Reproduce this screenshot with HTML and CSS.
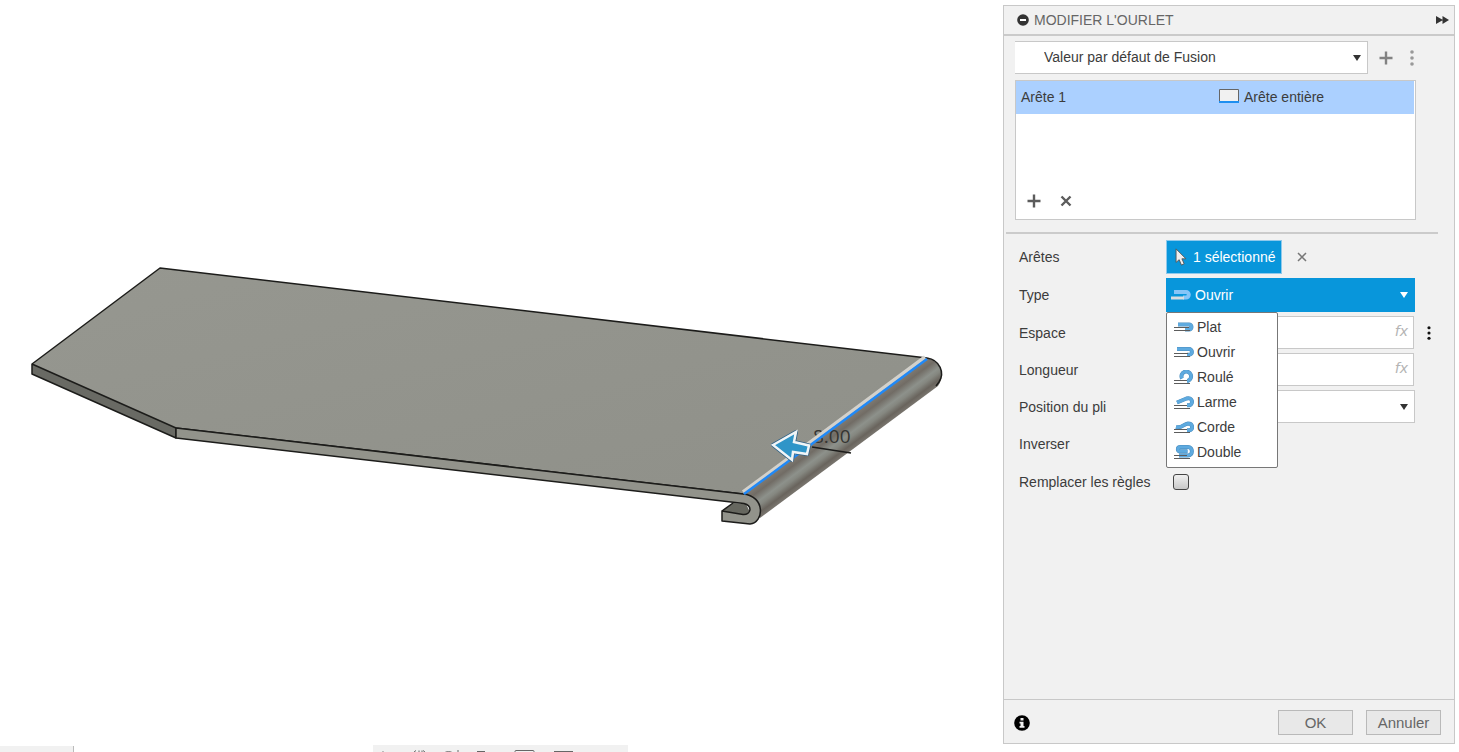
FILE: index.html
```html
<!DOCTYPE html>
<html lang="fr">
<head>
<meta charset="utf-8">
<title>Modifier l'ourlet</title>
<link rel="stylesheet" href="styles.css">
</head>
<body>
<svg class="sprites" aria-hidden="true">
  <symbol id="hem-flat" viewBox="0 0 20 14">
    <path class="hem-edge" d="M4 4.500H15a2.500 2.500 0 0 1 0 5H11"/>
    <path class="hem-fill" d="M4 4.500H15a2.500 2.500 0 0 1 0 5H11"/>
    <path class="hem-line" d="M0 7.500H15M0 10.500H16"/>
  </symbol>
  <symbol id="hem-open" viewBox="0 0 20 14">
    <path class="hem-edge" d="M3 4H15a2.900 2.900 0 0 1 0 5.800H13"/>
    <path class="hem-fill" d="M3 4H15a2.900 2.900 0 0 1 0 5.800H13"/>
    <path class="hem-line" d="M0 8.500H14M0 11.500H16"/>
  </symbol>
  <symbol id="hem-rolled" viewBox="0 0 20 14">
    <path class="hem-edge" d="M8 8.500A4.800 4.800 0 1 1 14 10.800H13"/>
    <path class="hem-fill" d="M8 8.500A4.800 4.800 0 1 1 14 10.800H13"/>
    <path class="hem-line" d="M0 10.500H13M0 13.500H16"/>
  </symbol>
  <symbol id="hem-tear" viewBox="0 0 20 14">
    <path class="hem-edge" d="M3 7.500L12.500 3.500C18 1.500 20 8.500 15.500 10.300H13"/>
    <path class="hem-fill" d="M3 7.500L12.500 3.500C18 1.500 20 8.500 15.500 10.300H13"/>
    <path class="hem-line" d="M0 10.500H13M0 13.500H16"/>
  </symbol>
  <symbol id="hem-rope" viewBox="0 0 20 14">
    <path class="hem-edge" d="M2 7C8 8.500 9.500 4 14 3.500C19 3.500 19.500 9.500 15.500 10.300H13"/>
    <path class="hem-fill" d="M2 7C8 8.500 9.500 4 14 3.500C19 3.500 19.500 9.500 15.500 10.300H13"/>
    <path class="hem-line" d="M0 9.500H13M0 12.500H16"/>
  </symbol>
  <symbol id="hem-double" viewBox="0 0 20 14">
    <path class="hem-edge" d="M13.500 6.300H6.500C3 6.300 3 2 6.500 2H14C19.200 2 19.200 10.500 14 10.500H5"/>
    <path class="hem-fill" d="M13.500 6.300H6.500C3 6.300 3 2 6.500 2H14C19.200 2 19.200 10.500 14 10.500H5"/>
    <path class="hem-line" d="M0 10.500H13M0 13.500H16"/>
  </symbol>
  <symbol id="plus" viewBox="0 0 14 14"><path d="M7 .5V13.500M.5 7H13.500" fill="none" stroke="currentColor" stroke-width="2.400"/></symbol>
  <symbol id="cross" viewBox="0 0 12 12"><path d="M2 2L10 10M10 2L2 10" fill="none" stroke="currentColor"/></symbol>
  <symbol id="dots" viewBox="0 0 4 16"><g fill="currentColor"><circle cx="2" cy="2" r="1.800"/><circle cx="2" cy="8" r="1.800"/><circle cx="2" cy="14" r="1.800"/></g></symbol>
</svg>

<div class="app">
  <main class="canvas">
    <svg class="model" viewBox="0 0 1003 752" preserveAspectRatio="xMinYMid meet" role="img" aria-label="Tôle avec ourlet ouvert">
      <defs>
        <linearGradient id="roll" gradientUnits="userSpaceOnUse" x1="835" y1="426" x2="852" y2="449">
          <stop offset="0" stop-color="#827d75"/>
          <stop offset=".25" stop-color="#716c65"/>
          <stop offset=".52" stop-color="#8d918b"/>
          <stop offset=".65" stop-color="#858780"/>
          <stop offset=".86" stop-color="#69645d"/>
          <stop offset="1" stop-color="#77736c"/>
        </linearGradient>
        <linearGradient id="face" x1="0" y1="0" x2="1" y2="1">
          <stop offset="0" stop-color="#969790"/>
          <stop offset="1" stop-color="#8f9089"/>
        </linearGradient>
      </defs>
      <path d="M743 494L927 358C940 361 946 374 938 386L760 518Z" fill="url(#roll)"/>
      <path class="edge" d="M927 358C940 360 945 373 939 382L936 386"/>
      <path d="M32 364L176 428V438L32 374Z" fill="#696a64"/>
      <path d="M176 428L743 494V503L176 438Z" fill="#8f9088"/>
      <path d="M160 268L927 358L743 494L176 428L32 364Z" fill="url(#face)"/>
      <path class="edge" d="M927 358L160 268L32 364L176 428L743 494M32 364V374L176 438V428"/>
      <path d="M722 511L733 503L746 504L750 512L746 515Z" fill="#66675f"/>
      <path class="edge" d="M722 511L733 503"/>
      <path class="edge" d="M743 494C766 496 764 523 750 524L722 521V511L743 514.500C751 515 753 506 744 503.500L176 438V428L743 494Z" fill="#92938b"/>
      <text class="dimension" x="813" y="443">8.00</text>
      <path class="edge" d="M812 447L851 453"/>
      <path d="M743 492L925 357" stroke="#d3d1cb" stroke-width="3.500"/>
      <path d="M744 494L927 359" stroke="#2089f7" stroke-width="2.500"/>
      <path d="M773 445L796 432L794 442L809 445.500L807 454L793 452L792 460Z" fill="#2f95c8" stroke="#2f6287" stroke-width="4" stroke-linejoin="round"/>
      <path d="M773 445L796 432L794 442L809 445.500L807 454L793 452L792 460Z" fill="#2f95c8" stroke="#f1f5f7" stroke-width="2.500"/>
    </svg>
    <div class="dock dock-left"></div>
    <div class="dock dock-nav">
      <svg class="dock-icons" viewBox="0 0 255 7" aria-hidden="true">
        <g fill="none" stroke="#666">
          <path d="M9 6.500H11" stroke="#bbb"/><path d="M41 7L43 5.500M46 7V5.500M49 7V5.500M52 7L50 5.500"/>
          <path d="M71 8A6 4 0 0 1 80 8M85 5V8M104 6.500H112M142 8V6.500Q142 5.500 143 5.500H160Q161 5.500 161 6.500V8"/>
          <path d="M181 6.500H200"/>
        </g>
      </svg>
    </div>
  </main>

  <form class="panel">
    <header class="panel-head">
      <svg class="collapse" viewBox="0 0 12 12" aria-hidden="true"><circle cx="6" cy="6" r="5.800" fill="#333"/><path d="M3 6H9" stroke="#fff" stroke-width="2"/></svg>
      <h1 class="title">MODIFIER L'OURLET</h1>
      <button class="icon-btn forward" type="button" aria-label="Développer"><svg viewBox="0 0 13 8"><path d="M0 0L7 4L0 8ZM6.500 0L13 4L6.500 8Z" fill="#333"/></svg></button>
    </header>

    <div class="panel-body">
      <div class="rule-row">
        <span class="select-wrap rule-wrap">
          <select class="select rule-select" aria-label="Règle de tôle"><option>Valeur par défaut de Fusion</option></select>
          <svg class="caret" viewBox="0 0 8 6"><path d="M0 0H8L4 6Z"/></svg>
        </span>
        <button class="icon-btn muted" type="button" aria-label="Ajouter une règle"><svg class="ico-14"><use href="#plus"/></svg></button>
        <button class="icon-btn pale" type="button" aria-label="Plus d'options"><svg class="ico-dots"><use href="#dots"/></svg></button>
      </div>

      <section class="edge-list">
        <div class="edge-row">
          <span>Arête 1</span>
          <span class="edge-kind"><svg class="ico-edge" viewBox="0 0 20 15"><path d="M.5 12V.5H19.500V12" fill="#f1f1f1" stroke="#666"/><path d="M0 13H20" stroke="#1e8ff0" stroke-width="2"/></svg>Arête entière</span>
        </div>
        <div class="edge-actions">
          <button class="icon-btn dark" type="button" aria-label="Ajouter"><svg class="ico-14"><use href="#plus"/></svg></button>
          <button class="icon-btn dark strong" type="button" aria-label="Supprimer"><svg class="ico-12" viewBox="0 0 12 12"><path d="M1.500 1.500L10.500 10.500M10.500 1.500L1.500 10.500" stroke="currentColor" stroke-width="2.400"/></svg></button>
        </div>
      </section>

      <hr class="divider">

      <div class="fields">
        <span class="label">Arêtes</span>
        <div class="control tall">
          <button class="pick" type="button"><svg class="pointer" viewBox="0 0 13 20"><path d="M1 1V16L4.500 13L7 19L10 17.500L7.500 12H12Z" fill="#eee" stroke="#555"/></svg>1 sélectionné</button>
          <button class="icon-btn thin" type="button" aria-label="Effacer la sélection"><svg class="ico-12" viewBox="0 0 12 12"><path d="M2 2L10 10M10 2L2 10" stroke="currentColor" stroke-width="1.500"/></svg></button>
        </div>

        <label class="label" for="type">Type</label>
        <div class="control tall">
          <span class="select-wrap type-wrap">
            <select class="select type-select" id="type"><option>Ouvrir</option></select>
            <svg class="type-icon" viewBox="0 0 20 14"><path d="M3 4H15a2.800 2.800 0 0 1 0 5.600H12" fill="none" stroke="#86c5f8" stroke-width="4"/><path d="M0 10H13" stroke="#d8dcdf" stroke-width="3"/></svg>
            <svg class="caret" viewBox="0 0 8 6"><path d="M0 0H8L4 6Z"/></svg>
            <ul class="menu" role="listbox" aria-label="Type">
              <li class="option" role="option"><svg class="hem"><use href="#hem-flat"/></svg>Plat</li>
              <li class="option" role="option" aria-selected="true"><svg class="hem"><use href="#hem-open"/></svg>Ouvrir</li>
              <li class="option" role="option"><svg class="hem"><use href="#hem-rolled"/></svg>Roulé</li>
              <li class="option" role="option"><svg class="hem"><use href="#hem-tear"/></svg>Larme</li>
              <li class="option" role="option"><svg class="hem"><use href="#hem-rope"/></svg>Corde</li>
              <li class="option" role="option"><svg class="hem"><use href="#hem-double"/></svg>Double</li>
            </ul>
          </span>
        </div>

        <label class="label" for="gap">Espace</label>
        <div class="control">
          <span class="input-wrap"><input class="input" id="gap" type="text"><span class="fx">fx</span></span>
          <button class="icon-btn black" type="button" aria-label="Options d'espace"><svg class="ico-dots small"><use href="#dots"/></svg></button>
        </div>

        <label class="label" for="length">Longueur</label>
        <div class="control">
          <span class="input-wrap"><input class="input" id="length" type="text"><span class="fx">fx</span></span>
        </div>

        <label class="label" for="position">Position du pli</label>
        <div class="control">
          <span class="select-wrap"><select class="select" id="position"><option></option></select><svg class="caret" viewBox="0 0 8 6"><path d="M0 0H8L4 6Z"/></svg></span>
        </div>

        <span class="label">Inverser</span>
        <div class="control tall"></div>

        <label class="label" for="override">Remplacer les règles</label>
        <div class="control tall"><input class="check" id="override" type="checkbox"></div>
      </div>
    </div>

    <footer class="panel-foot">
      <svg class="info" viewBox="0 0 16 16" aria-hidden="true"><circle cx="8" cy="8" r="7.800"/><path d="M6.500 3H9.500V5.500H6.500ZM5.500 6.800H9.500V11H10.500V12.800H5.500V11H6.500V8.500H5.500Z" fill="#f1f1f1"/></svg>
      <button class="btn" type="button">OK</button>
      <button class="btn" type="button">Annuler</button>
    </footer>
  </form>
</div>
</body>
</html>
```
FILE: styles.css
```css
* { box-sizing: border-box; }

body {
  margin: 0;
  background: #fff;
  color: #3c3c3c;
  font: 14px/20px "Liberation Sans", Arial, sans-serif;
}

button, input, select { font: inherit; color: inherit; }

.sprites { position: absolute; width: 0; height: 0; }

.hem-edge { fill: none; stroke: #4a8dbf; stroke-width: 4; }
.hem-fill { fill: none; stroke: #5eaadf; stroke-width: 3; }
.hem-line { fill: none; stroke: #5c5c5c; }

.app { display: flex; height: 100vh; overflow: hidden; }

/* Model view */
.canvas { position: relative; flex: 1; min-width: 0; }
.model { display: block; width: 100%; height: 100%; }
.edge { fill: none; stroke: #1c1c1a; stroke-width: 1.5; stroke-linejoin: round; }
path.edge[fill] { fill: #92938b; }
.dimension { font: 19px "Open Sans", sans-serif; fill: #353532; }

.dock { position: absolute; bottom: 0; background: #f1f1f1; overflow: hidden; }
.dock-left { left: 0; width: 74px; height: 6px; border-right: 1px solid #bbb; }
.dock-nav { left: 373px; width: 255px; height: 7px; }
.dock-icons { display: block; width: 255px; height: 7px; }

/* Panel */
.panel {
  display: flex;
  flex-direction: column;
  flex: 0 0 452px;
  margin: 5px 4px 8px 0;
  border: 1px solid #c8c8c8;
  background: #f1f1f1;
}
.panel-head {
  display: flex;
  align-items: center;
  height: 30px;
  padding: 0 5px 0 13px;
  border-bottom: 2px solid #cacaca;
}
.collapse { width: 12px; height: 12px; margin-right: 5px; }
.title { flex: 1; margin: 0; font-size: 14px; font-weight: 400; color: #666; }

.icon-btn { display: flex; padding: 0; border: 0; background: none; }
.forward svg { width: 13px; height: 8px; }
.muted { color: #828282; }
.pale { color: #999; }
.dark { color: #5c5c5c; }
.black { color: #111; }
.thin { color: #777; }
.ico-14 { width: 14px; height: 14px; }
.ico-12 { width: 12px; height: 12px; }
.ico-dots { width: 4px; height: 16px; }
.ico-dots.small { height: 14px; }

.panel-body { flex: 1; padding: 5px 38px 0 11px; }

.rule-row { display: flex; align-items: center; height: 33px; margin-right: 2px; }
.rule-row .muted { margin: 0 17px 0 11px; }
.rule-wrap { flex: 1; }

.select-wrap { position: relative; flex: 1; align-self: stretch; }
.select {
  display: block;
  appearance: none;
  width: 100%;
  height: 100%;
  padding: 0 28px 2px;
  border: 1px solid #c8c8c8;
  border-radius: 0;
  background: #fff;
}
.rule-select { border-left: 0; padding-left: 29px; }
.caret {
  position: absolute;
  top: 0;
  right: 7px;
  bottom: 0;
  width: 8px;
  height: 6px;
  margin: auto 0;
  fill: #333;
  pointer-events: none;
}

.edge-list {
  display: flex;
  flex-direction: column;
  justify-content: space-between;
  height: 140px;
  margin-top: 6px;
  border: 1px solid #c8c8c8;
  background: #fff;
}
.edge-row {
  display: grid;
  grid-template-columns: 198px 1fr;
  align-items: center;
  height: 33px;
  margin-right: 1px;
  padding: 0 0 2px 5px;
  background: #abd0ff;
}
.edge-kind { display: flex; align-items: center; gap: 5px; }
.ico-edge { width: 20px; height: 15px; }
.edge-actions { display: flex; align-items: center; gap: 19px; padding: 0 0 11px 11px; }

.divider { height: 2px; margin: 12px -22px 6px -9px; border: 0; background: #cbcbcb; }

.fields { display: grid; grid-template-columns: 147px 1fr; gap: 4px 0; padding: 0 1px 0 4px; }
.fields { align-items: center; }
.control { display: flex; align-items: center; height: 33px; }
.tall { height: 34px; }

.pick {
  display: flex;
  align-items: center;
  gap: 6px;
  align-self: stretch;
  width: 116px;
  padding: 0 0 0 8px;
  border: 1px solid #8ec9ec;
  background: #0896db;
  color: #fff;
  white-space: nowrap;
}
.pointer { width: 12px; height: 18px; }
.pick + .thin { margin-left: 14px; }

.type-select { padding: 0 28px; border-color: #0896db; background: #0896db; color: #fff; }
.type-wrap .caret { fill: #fff; }
.type-icon { position: absolute; top: 10px; left: 5px; width: 20px; height: 14px; pointer-events: none; }

.menu {
  position: absolute;
  z-index: 2;
  top: 100%;
  left: 0;
  width: 112px;
  margin: 0;
  padding: 1px 0 3px;
  border: 1px solid #777;
  border-radius: 2px;
  background: #fff;
  list-style: none;
}
.option { display: flex; align-items: center; gap: 3px; height: 25px; padding-left: 7px; }
.hem { width: 20px; height: 14px; }

.input-wrap { position: relative; flex: 1; align-self: stretch; margin-right: 1px; }
.input { display: block; width: 100%; height: 100%; padding: 0 28px 0 6px; border: 1px solid #c8c8c8; background: #fff; }
.fx { position: absolute; top: 5px; right: 6px; font: italic 14px/20px "DejaVu Sans", sans-serif; color: #b4b4b4; }
.control .black { margin: 0 -16px 0 12px; }

.check {
  appearance: none;
  width: 16px;
  height: 16px;
  margin: 0 0 0 7px;
  border: 1px solid #444;
  border-radius: 3px;
  background: linear-gradient(#f0f0f0, #c8c8c8);
}

.panel-foot {
  display: flex;
  align-items: center;
  gap: 13px;
  height: 44px;
  padding: 2px 13px 0 10px;
  border-top: 1px solid #c8c8c8;
}
.info { width: 16px; height: 16px; margin-right: auto; }
.btn {
  width: 75px;
  height: 25px;
  padding: 0;
  border: 1px solid #b9b9b9;
  background: #e8e8e8;
  color: #666;
  font-size: 15px;
}
```
